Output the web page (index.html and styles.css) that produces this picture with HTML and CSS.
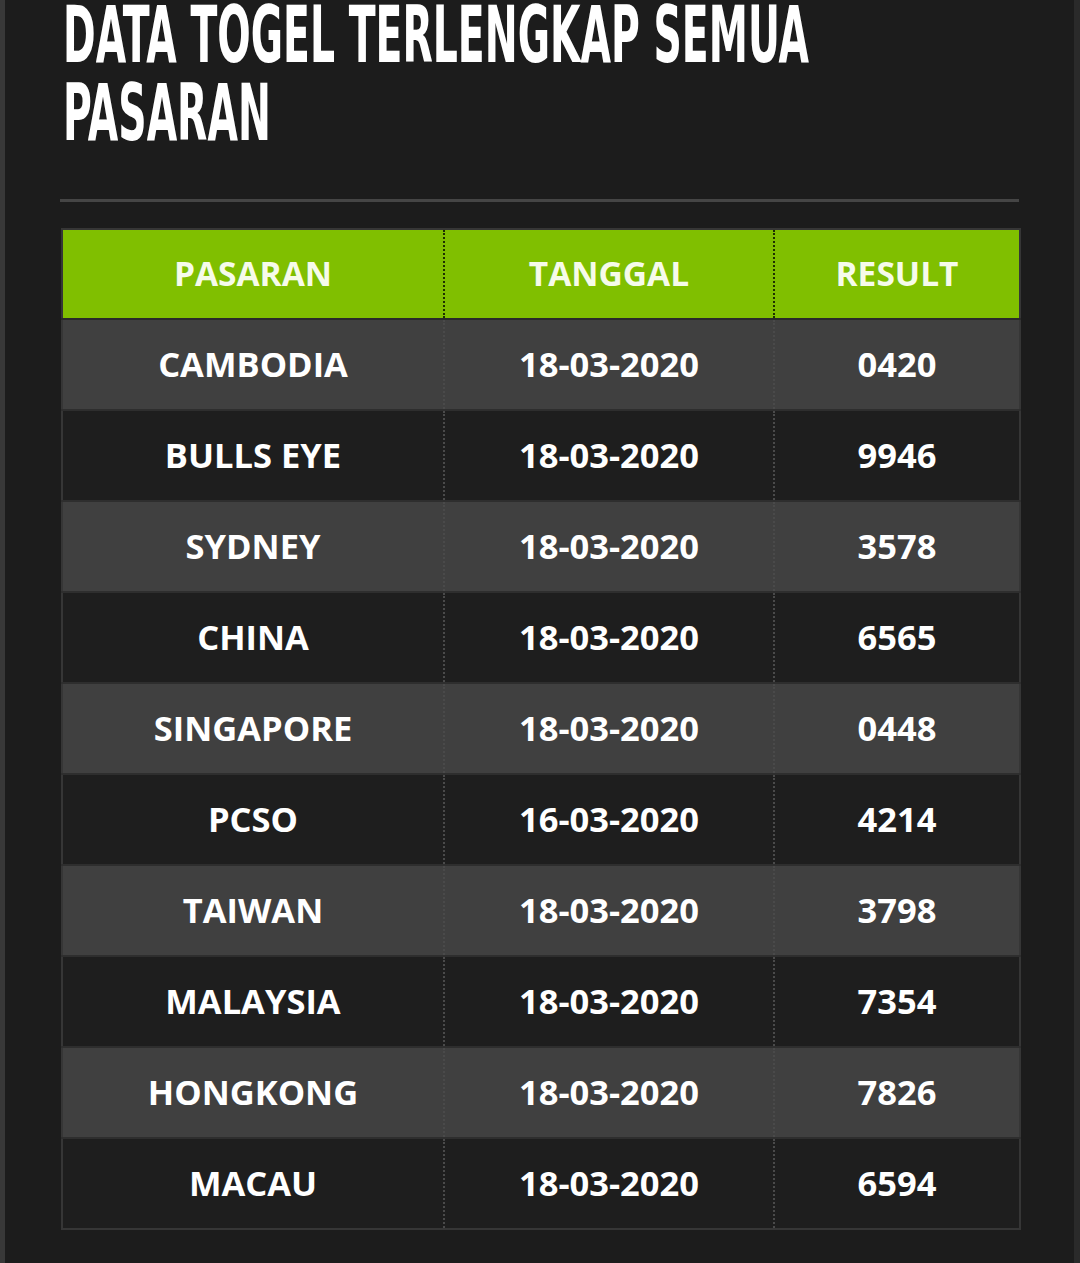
FILE: index.html
```html
<!DOCTYPE html>
<html lang="id">
<head>
<meta charset="utf-8">
<title>Data Togel Terlengkap Semua Pasaran</title>
<link rel="stylesheet" href="styles.css">
</head>
<body>
<div class="page">
  <div class="title-wrap">
    <h1 class="title">DATA TOGEL TERLENGKAP SEMUA<br>PASARAN</h1>
  </div>
  <hr class="divider">
  <table class="results">
    <colgroup>
      <col class="c1"><col class="c2"><col class="c3">
    </colgroup>
    <thead>
      <tr><th>PASARAN</th><th>TANGGAL</th><th>RESULT</th></tr>
    </thead>
    <tbody>
      <tr><td>CAMBODIA</td><td>18-03-2020</td><td>0420</td></tr>
      <tr><td>BULLS EYE</td><td>18-03-2020</td><td>9946</td></tr>
      <tr><td>SYDNEY</td><td>18-03-2020</td><td>3578</td></tr>
      <tr><td>CHINA</td><td>18-03-2020</td><td>6565</td></tr>
      <tr><td>SINGAPORE</td><td>18-03-2020</td><td>0448</td></tr>
      <tr><td>PCSO</td><td>16-03-2020</td><td>4214</td></tr>
      <tr><td>TAIWAN</td><td>18-03-2020</td><td>3798</td></tr>
      <tr><td>MALAYSIA</td><td>18-03-2020</td><td>7354</td></tr>
      <tr><td>HONGKONG</td><td>18-03-2020</td><td>7826</td></tr>
      <tr><td>MACAU</td><td>18-03-2020</td><td>6594</td></tr>
    </tbody>
  </table>
</div>
</body>
</html>
```

FILE: styles.css
```css
html, body {
  margin: 0;
  padding: 0;
  background: #1c1c1c;
}
body {
  font-family: "Open Sans", "DejaVu Sans", sans-serif;
  color: #ffffff;
}
.page {
  min-height: 1263px;
  box-sizing: border-box;
  background: #1c1c1c;
  border-left: 5px solid #383838;
  border-right: 6px solid #2a2a2a;
  padding: 0 55px 0 55px;
  overflow-x: clip;
}
.title-wrap {
  display: flow-root;
  padding-left: 3px;
  height: 160px;
}
.title {
  margin: -4px 0 0 0;
  font-family: "DejaVu Sans Condensed", "Liberation Sans", sans-serif;
  font-weight: 700;
  font-size: 78px;
  line-height: 78px;
  white-space: nowrap;
  width: max-content;
  transform: scaleX(0.561);
  transform-origin: left top;
  color: #ffffff;
}
.divider {
  margin: 39px 0 0 0;
  border: 0;
  height: 3px;
  background: #454545;
}
.results {
  margin-top: 26px;
  margin-left: 1px;
  width: 958px;
  border-collapse: collapse;
  table-layout: fixed;
  border: 2px solid #363636;
}
.c1 { width: 382px; }
.c2 { width: 330px; }
.c3 { width: 246px; }
.results th {
  height: 86px;
  padding: 0 0 2px 0;
  background: #80bf00;
  color: #f6fbea;
  font-size: 33.5px;
  font-weight: 700;
  text-align: center;
  border-left: 2px dotted #1d3000;
  border-bottom: 2px solid #2a2a2a;
}
.results th:first-child { border-left: 2px solid #363636; }
.results td {
  height: 87px;
  padding: 0 0 2px 0;
  font-size: 34.5px;
  font-weight: 700;
  text-align: center;
  border-left: 2px dotted #4a4a4a;
  border-bottom: 2px solid #2e2e2e;
}
.results td:first-child { border-left: 2px solid #363636; }
.results tbody tr:nth-child(odd) td { background: #404040; }
.results tbody tr:nth-child(even) td { background: #1e1e1e; }
.results tbody tr:last-child td { border-bottom: 2px solid #363636; }
```
